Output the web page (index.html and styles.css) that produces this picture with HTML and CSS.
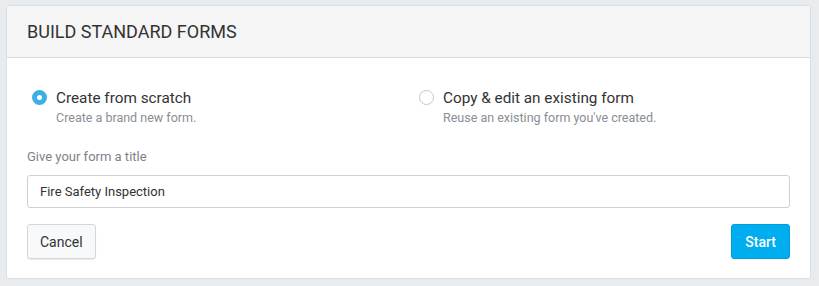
FILE: index.html
```html
<!DOCTYPE html>
<html lang="en">
<head>
    <meta charset="UTF-8">
    <meta name="viewport" content="width=device-width, initial-scale=1.0">
    <title>Build Standard Forms</title>
    <link rel="stylesheet" href="styles.css">
</head>
<body>
    <div class="panel">
        <div class="panel-header">
            <h1>BUILD STANDARD FORMS</h1>
        </div>
        <div class="panel-body">
            <div class="options">
                <label class="option option-first">
                    <span class="radio checked"></span>
                    <span class="option-text">
                        <span class="option-title">Create from scratch</span>
                        <span class="option-desc">Create a brand new form.</span>
                    </span>
                </label>
                <label class="option">
                    <span class="radio"></span>
                    <span class="option-text">
                        <span class="option-title">Copy &amp; edit an existing form</span>
                        <span class="option-desc">Reuse an existing form you've created.</span>
                    </span>
                </label>
            </div>
            <div class="form-group">
                <label for="title">Give your form a title</label>
                <input type="text" id="title" value="Fire Safety Inspection">
            </div>
            <div class="actions">
                <button class="btn btn-default">Cancel</button>
                <button class="btn btn-primary">Start</button>
            </div>
        </div>
    </div>
</body>
</html>
```

FILE: styles.css
```css
* {
    margin: 0;
    padding: 0;
    box-sizing: border-box;
    font-family: Roboto, 'Liberation Sans', sans-serif;
}
body {
    background-color: #e8ecef;
    padding: 5px 8px 0 6px;
}
.panel {
    background-color: #fff;
    border: 1px solid #dcdfe2;
    border-radius: 3px;
    height: 274px;
}
.panel-header {
    background-color: #f5f5f5;
    border-bottom: 1px solid #dcdcdc;
    height: 52px;
    padding: 0 20px;
    display: flex;
    align-items: center;
    border-radius: 3px 3px 0 0;
}
.panel-header h1 {
    font-size: 18px;
    font-weight: 400;
    color: #333;
}
.panel-body {
    padding: 30px 20px 20px;
}
.options {
    display: flex;
    padding-left: 5px;
}
.option {
    display: flex;
    align-items: flex-start;
    gap: 9px;
    cursor: pointer;
}
.option-first {
    width: 387px;
}
.radio {
    width: 15px;
    height: 15px;
    border-radius: 50%;
    border: 1px solid #c4c8cc;
    margin-top: 2px;
    flex-shrink: 0;
}
.radio.checked {
    border: 5px solid #3cb0e5;
}
.option-text {
    display: flex;
    flex-direction: column;
}
.option-title {
    font-size: 15.3px;
    color: #333;
    line-height: 20px;
}
.option-desc {
    font-size: 12.5px;
    color: #888e95;
    line-height: 20px;
}
.form-group {
    margin-top: 21px;
}
.form-group label {
    display: block;
    font-size: 13px;
    color: #7d838a;
    margin-bottom: 11px;
}
.form-group input {
    width: 100%;
    height: 33px;
    border: 1px solid #cdd1d5;
    border-radius: 3px;
    padding: 0 12px;
    font-size: 13px;
    color: #333;
}
.actions {
    display: flex;
    justify-content: space-between;
    margin-top: 16px;
}
.btn {
    height: 35px;
    padding: 0 12px;
    font-size: 14px;
    border-radius: 3px;
    cursor: pointer;
}
.btn-default {
    background-color: #f8f9fa;
    border: 1px solid #d5d8db;
    color: #333;
    box-shadow: 0 1px 1px rgba(0, 0, 0, 0.08);
}
.btn-primary {
    background-color: #00aeef;
    border: 1px solid #009fdc;
    color: #fff;
    font-weight: 500;
    padding: 0 13px;
}
```
